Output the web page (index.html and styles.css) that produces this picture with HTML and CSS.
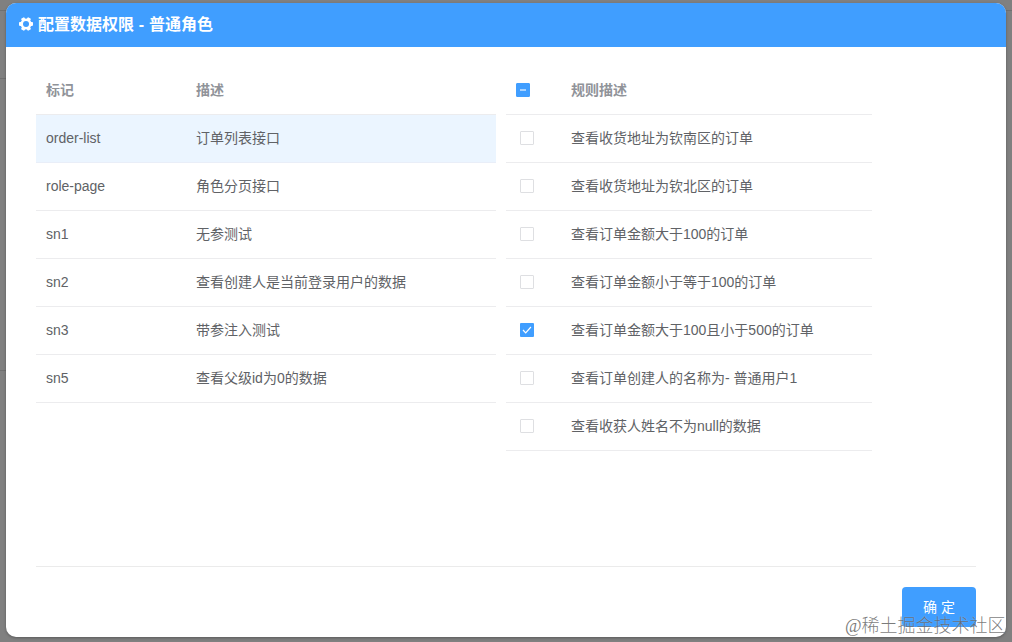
FILE: index.html
```html
<!DOCTYPE html>
<html lang="zh-CN">
<head>
<meta charset="utf-8">
<title>配置数据权限</title>
<link rel="stylesheet" href="styles.css">
</head>
<body>
<div class="backdrop">
  <i class="seam seam-1"></i><i class="seam seam-2"></i><i class="seam seam-3"></i>
</div>
<section class="dialog">
  <header class="dialog-header">
    <svg class="gear" viewBox="0 0 16 16"><g fill="#fff"><rect x="1" y="6.1" width="14" height="3.8" rx=".8"/><rect x="1" y="6.1" width="14" height="3.8" rx=".8" transform="rotate(60 8 8)"/><rect x="1" y="6.1" width="14" height="3.8" rx=".8" transform="rotate(120 8 8)"/><circle cx="8" cy="8" r="5.5"/></g><circle cx="8" cy="8" r="3" fill="#409eff"/></svg>
    <h1>配置数据权限 - 普通角色</h1>
  </header>
  <main class="dialog-body">
    <div class="table api-table">
      <div class="row head"><span>标记</span><span>描述</span></div>
      <div class="row current"><span>order-list</span><span>订单列表接口</span></div>
      <div class="row"><span>role-page</span><span>角色分页接口</span></div>
      <div class="row"><span>sn1</span><span>无参测试</span></div>
      <div class="row"><span>sn2</span><span>查看创建人是当前登录用户的数据</span></div>
      <div class="row"><span>sn3</span><span>带参注入测试</span></div>
      <div class="row"><span>sn5</span><span>查看父级id为0的数据</span></div>
    </div>
    <div class="table rule-table">
      <div class="row head"><i class="check partial"></i><span>规则描述</span></div>
      <div class="row"><i class="check"></i><span>查看收货地址为钦南区的订单</span></div>
      <div class="row"><i class="check"></i><span>查看收货地址为钦北区的订单</span></div>
      <div class="row"><i class="check"></i><span>查看订单金额大于100的订单</span></div>
      <div class="row"><i class="check"></i><span>查看订单金额小于等于100的订单</span></div>
      <div class="row"><i class="check checked"><svg viewBox="0 0 14 14"><path d="M3 7 5.7 9.8 10.9 4" fill="none" stroke="#fff" stroke-width="1.2"/></svg></i><span>查看订单金额大于100且小于500的订单</span></div>
      <div class="row"><i class="check"></i><span>查看订单创建人的名称为- 普通用户1</span></div>
      <div class="row"><i class="check"></i><span>查看收获人姓名不为null的数据</span></div>
    </div>
  </main>
  <footer class="dialog-footer"><button class="confirm">确 定</button></footer>
</section>
<div class="watermark">@稀土掘金技术社区</div>
</body>
</html>
```
FILE: styles.css
```css
* { box-sizing: border-box; }
body {
  margin: 0;
  width: 1012px;
  height: 642px;
  padding: 3px 6px 5px;
  overflow: hidden;
  background: #808080;
  position: relative;
  font: 14px/23px "Liberation Sans", "Noto Sans CJK SC", sans-serif;
  color: #606266;
}
.backdrop { position: absolute; inset: 0; }
.seam { position: absolute; left: 0; width: 100%; height: 1px; background: #707070; }
.seam-1 { top: 10px; }
.seam-2 { top: 78px; width: 50%; }
.seam-3 { top: 370px; width: 50%; }
.dialog {
  position: relative;
  display: flex;
  flex-direction: column;
  height: 634px;
  border-radius: 10px;
  overflow: hidden;
  background: #fff;
  box-shadow: 0 1px 3px rgba(0, 0, 0, .3);
}
.dialog-header {
  display: flex;
  align-items: center;
  gap: 4px;
  height: 44px;
  padding: 0 12px;
  background: #409eff;
  color: #fff;
}
.gear { width: 16px; height: 16px; margin-top: -2px; }
.dialog-header h1 { margin: -1px 0 0; font-size: 16px; line-height: 24px; font-weight: 700; word-spacing: .4px; }
.dialog-body { flex: 1; display: flex; gap: 10px; padding: 20px 30px 0; }
.api-table { width: 460px; }
.rule-table { width: 366px; }
.row {
  display: grid;
  align-items: center;
  height: 48px;
  padding-left: 10px;
  border-bottom: 1px solid #ececee;
  white-space: nowrap;
}
.api-table .row { grid-template-columns: 150px 1fr; }
.rule-table .row { grid-template-columns: 55px 1fr; }
.head { color: #909399; font-weight: 700; }
.current { background: #ebf5ff; border-bottom-color: #e9eef8; }
.check {
  display: block;
  width: 14px;
  height: 14px;
  margin: 0 0 1px 4px;
  border: 1px solid #dedfe2;
  border-radius: 1px;
  background: #fff;
}
.partial {
  display: flex;
  align-items: center;
  justify-content: center;
  margin-left: 0;
  background: #409eff;
  border-color: #409eff;
}
.partial::before { content: ""; width: 6px; height: 2px; background: #a9d3ff; }
.checked { border: 0; background: #409eff; }
.checked svg { display: block; width: 14px; height: 14px; }
.dialog-footer {
  display: flex;
  justify-content: flex-end;
  height: 71px;
  margin: 0 30px;
  padding-top: 20px;
  border-top: 1px solid #ebebeb;
}
.confirm {
  width: 74px;
  height: 40px;
  padding: 0;
  border: 0;
  border-radius: 4px;
  background: #409eff;
  color: #fff;
  font: 400 14px/40px "Liberation Sans", "Noto Sans CJK SC", sans-serif;
}
.watermark {
  position: absolute;
  left: 845px;
  top: 613px;
  font: 300 18px/26px "Liberation Serif", "Noto Sans CJK SC", serif;
  color: rgba(80, 80, 80, .75);
  text-shadow: 0 0 1px rgba(255, 255, 255, .5);
  white-space: nowrap;
}
```
